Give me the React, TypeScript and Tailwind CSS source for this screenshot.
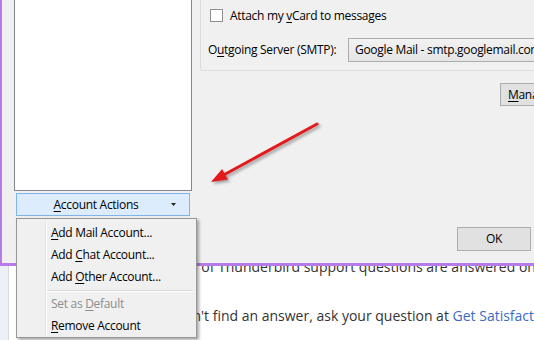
import React from 'react'

const ui = "font-['Open_Sans','Noto_Sans',sans-serif] tracking-[-0.3px]"

function Key({ children }: { children: React.ReactNode }) {
  return <span className="underline underline-offset-2">{children}</span>
}

function MenuItem({ children, disabled }: { children: React.ReactNode; disabled?: boolean }) {
  return (
    <div className={`h-[22px] flex items-center pl-[34px] text-[12px] ${disabled ? 'text-[#8d8d8d]' : 'text-[#000]'}`}>
      <span>{children}</span>
    </div>
  )
}

export default function App() {
  return (
    <div className="w-[534px] h-[340px] relative overflow-hidden bg-white">
      {/* dialog */}
      <div className={`relative z-10 h-[266px] flex bg-[#f0f0f0] border-l-2 border-b-[3px] border-[#b77ae8] ${ui}`}>
        <div className="w-[198px] shrink-0 pl-[12px]">
          <div className="w-[178px] h-[191px] bg-white border border-[#828790] border-t-0" />
          <button className="mt-[2px] ml-[2px] w-[174px] h-[23px] relative flex items-center justify-center bg-[#dcecfc] border border-[#7eb4ea] text-[12px] text-black">
            <span className="-ml-[14px]">
              <Key>A</Key>ccount Actions
            </span>
            <svg className="absolute right-[13px] top-[9px]" width="5" height="3" viewBox="0 0 5 3">
              <path d="M0 0H5L2.5 3Z" fill="#222" />
            </svg>
          </button>
        </div>

        <div className="w-[340px] shrink-0 flex flex-col">
          <div className="h-[71px] border-l border-b border-[#dcdcdc] rounded-bl-[3px]">
            <div className="flex items-center pt-[9px] pl-[9px] h-[13px] box-content">
              <div className="w-[13px] h-[13px] shrink-0 bg-white border border-[#8f8f8f]" />
              <span className="ml-[7px] text-[12px] text-black whitespace-nowrap">
                Attach my <Key>v</Key>Card to messages
              </span>
            </div>
            <div className="flex items-center mt-[16px] h-[24px]">
              <span className="pl-[7px] w-[147px] shrink-0 text-[12px] text-black whitespace-nowrap">
                O<Key>u</Key>tgoing Server (SMTP):
              </span>
              <div className="h-[24px] flex-1 flex items-center pl-[6px] bg-gradient-to-b from-[#f2f2f2] to-[#e5e5e5] border border-[#acacac] text-[12px] text-black whitespace-nowrap overflow-hidden">
                Google Mail - smtp.googlemail.com
              </div>
            </div>
          </div>
          <button className="mt-[12px] ml-[300px] w-[110px] h-[23px] shrink-0 flex items-center pl-[7px] bg-[#e1e1e1] border border-[#adadad] text-[12px] text-black whitespace-nowrap">
            <Key>M</Key>anage Identities...
          </button>
          <button className="mt-[121px] ml-[257px] w-[74px] h-[24px] flex items-center justify-center bg-[#e1e1e1] border border-[#adadad] text-[12px] text-black">
            OK
          </button>
        </div>
      </div>

      {/* web page behind */}
      <div className="flex -mt-[12px] h-[86px]">
        <div className="w-[9px] shrink-0 bg-[#edf0f7] border-r border-[#d6d9e0]" />
        <div className="font-['Open_Sans',sans-serif] text-[14px] text-[#333] whitespace-nowrap">
          <p className="leading-[20px] mt-[3px] pl-[118px]">About 90% of Thunderbird support questions are answered on</p>
          <p className="leading-[20px] mt-[29px] pl-[129px]">
            If you can't find an answer, ask your question at{' '}
            <span className="text-[#3d6ac4]">Get Satisfaction</span>.
          </p>
        </div>
      </div>

      {/* red arrow annotation */}
      <svg
        className="absolute left-[205px] top-[118px] z-20 drop-shadow-[2px_2px_1.5px_rgba(0,0,0,0.35)]"
        width="120"
        height="72"
        viewBox="0 0 120 72"
      >
        <line x1="112" y1="6" x2="20" y2="56.3" stroke="#e3191b" strokeWidth="3" strokeLinecap="round" />
        <path d="M6 64L22.9 61.6L17.1 51Z" fill="#e3191b" />
      </svg>

      {/* dropdown menu */}
      <div className={`absolute z-30 left-[16px] top-[218px] w-[181px] h-[120px] bg-[#f0f0f0] border border-[#979797] shadow-[2px_2px_3px_rgba(0,0,0,0.35)] pt-[3px] ${ui}`}>
        <div className="absolute left-[28px] top-[2px] bottom-[2px] w-[2px] border-l border-[#e2e3e3] border-r border-r-white" />
        <div className="relative">
          <MenuItem>
            <Key>A</Key>dd Mail Account...
          </MenuItem>
          <MenuItem>
            Add <Key>C</Key>hat Account...
          </MenuItem>
          <MenuItem>
            Add <Key>O</Key>ther Account...
          </MenuItem>
          <div className="h-[5px] flex items-center pl-[30px] pr-[3px]">
            <div className="w-full h-[2px] border-t border-[#d7d7d7] border-b border-b-white" />
          </div>
          <MenuItem disabled>
            Set as <Key>D</Key>efault
          </MenuItem>
          <MenuItem>
            <Key>R</Key>emove Account
          </MenuItem>
        </div>
      </div>
    </div>
  )
}
